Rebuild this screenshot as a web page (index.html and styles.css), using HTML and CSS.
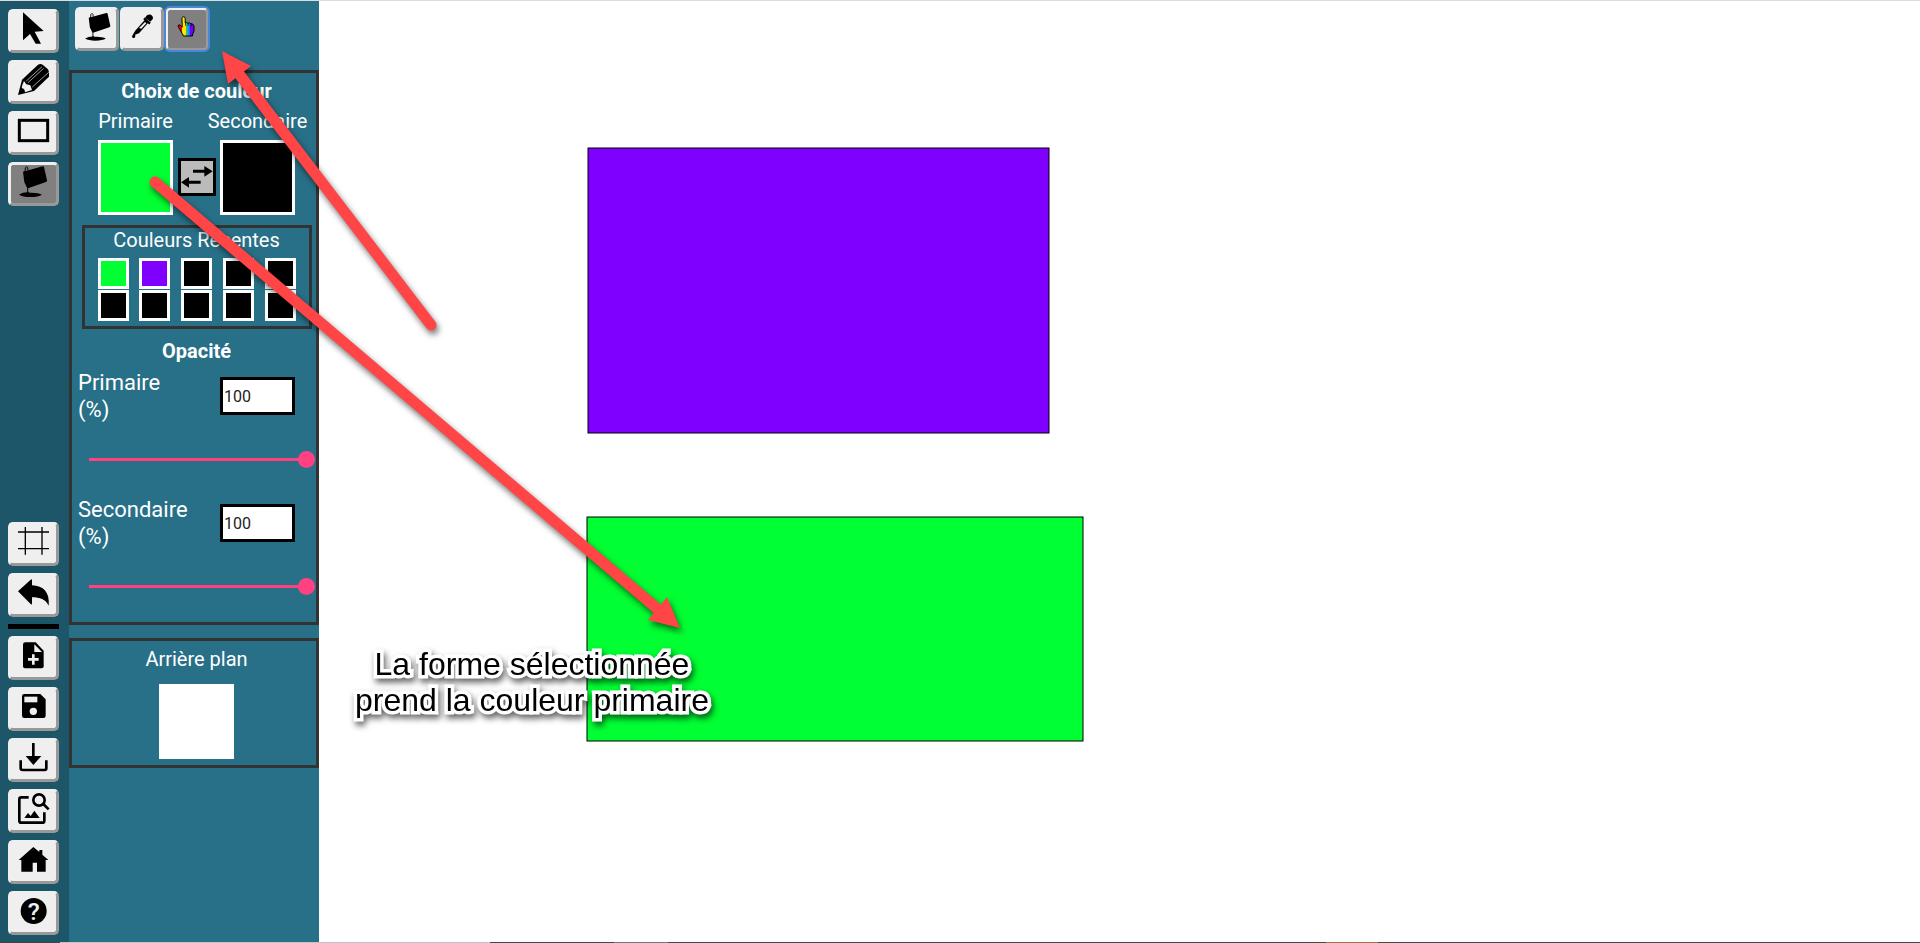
FILE: index.html
```html
<!DOCTYPE html>
<html lang="fr">
<head>
<meta charset="utf-8">
<title>Dessin</title>
<link rel="stylesheet" href="styles.css">
</head>
<body>
<svg class="defs" aria-hidden="true">
  <defs>
    <g id="bucket">
      <path d="M69 515L128 499Q131 498 132 501L141 541Q142 544 138 546L86 564Q82 565 80 561L73 547Z"/>
      <path d="M75 516Q75 500 80 500Q84 501 84 511M83 560V579" fill="none" stroke="#000" stroke-width="3"/>
      <path d="M57 584Q68 577 82 577Q84 573 88 578Q115 577 126 584Q116 591 91 591Q68 591 57 584Z"/>
    </g>
    <linearGradient id="rainbow" gradientUnits="userSpaceOnUse" x1="535" x2="585" y1="0" y2="0">
      <stop offset=".24" stop-color="#f00000"/><stop offset=".24" stop-color="#ffe600"/>
      <stop offset=".46" stop-color="#ffe600"/><stop offset=".46" stop-color="#35d000"/>
      <stop offset=".58" stop-color="#35d000"/><stop offset=".58" stop-color="#1ba8ff"/>
      <stop offset=".72" stop-color="#2465ff"/><stop offset=".72" stop-color="#6a00f0"/>
      <stop offset="1" stop-color="#7a00ff"/>
    </linearGradient>
  </defs>
</svg>
<div class="app">
  <nav class="rail" aria-label="Outils">
    <button class="tool" aria-label="Sélection"><svg viewBox="24 27 153 132"><path d="M69 37L131 93L104 95L123 131H107L90 102L69 121Z"/></svg></button>
    <button class="tool" aria-label="Crayon"><svg viewBox="24 180 153 132"><path d="M54 285L66 239L114 194Q121 190 128 194L143 207Q148 212 147 230L102 273Z"/><path class="light" d="M67 255L72 243L79 253L91 256L96 270L75 277Q75 266 65 264Z"/><path class="cut" d="M79 243L126 200M84 248L131 205M97 261L146 217"/></svg></button>
    <button class="tool" aria-label="Rectangle"><svg viewBox="24 333 153 132"><rect class="line" x="58" y="361" width="85" height="61" stroke-width="9"/></svg></button>
    <button class="tool active" aria-label="Couleur"><svg viewBox="24 486 153 132"><use href="#bucket"/></svg></button>
    <button class="tool first-low" aria-label="Grille"><svg viewBox="24 36 153 132"><path class="line" stroke-width="4" d="M76 51V134M126 51V134M54 66H147M54 116H147"/></svg></button>
    <button class="tool" aria-label="Annuler"><svg viewBox="24 189 153 132"><path d="M54 244L92 209Q96 205 96 211V226C130 227 150 247 146 287C137 268 120 262 96 262V280Q96 286 92 282Z"/></svg></button>
    <hr class="divider">
    <button class="tool" aria-label="Nouveau dessin"><svg viewBox="24 375 153 132"><path d="M69 401Q69 394 76 394H107L131 419V466Q131 472 125 472H75Q69 472 69 466Z"/><path class="light" d="M103 400V423H126Z"/><path class="cut wide" d="M100 430V461M84 445H116"/></svg></button>
    <button class="tool" aria-label="Sauvegarder"><svg viewBox="24 531 153 132"><path d="M66 559Q66 552 73 552H121L137 568V617Q137 624 130 624H73Q66 624 66 617Z"/><path class="light" d="M73 560H112V577H73Z"/><circle class="light" cx="100" cy="604" r="11"/></svg></button>
    <button class="tool" aria-label="Exporter"><svg viewBox="24 54 153 132"><path class="line" stroke-width="8" d="M62 121V144Q62 150 68 150H134Q139 150 139 144V121M100 69V110"/><path d="M77 108H124L100 135Z"/></svg></button>
    <button class="tool" aria-label="Galerie"><svg viewBox="24 207 153 132"><path class="line" stroke-width="8" d="M86 232H64Q58 232 58 238V302Q58 308 64 308H127Q133 308 133 302V277M130 252L146 268"/><circle class="line" stroke-width="8" cx="117" cy="240" r="17"/><path d="M73 294L84 279L92 288L103 272L119 294Z"/></svg></button>
    <button class="tool" aria-label="Accueil"><svg viewBox="24 360 153 132"><path d="M100 381L118 396V390H127V404L145 420H137V455H111V428H98V455H64V420H56Z"/></svg></button>
    <button class="tool" aria-label="Aide"><svg viewBox="24 513 153 132"><circle cx="101" cy="573" r="39"/><text class="mark" x="101" y="599" text-anchor="middle">?</text></svg></button>
  </nav>

  <aside class="panel">
    <div class="modes">
      <button class="mode" aria-label="Seau"><svg viewBox="225 21 132 132"><use href="#bucket" transform="translate(204 -410) scale(.9)"/></svg></button>
      <button class="mode" aria-label="Pipette"><svg viewBox="360 21 132 132"><path d="M435 53L441 46Q446 42 453 44Q460 48 459 56L451 65Z"/><path class="line" stroke-width="7" d="M432 55L450 71"/><path d="M434 60L444 69L417 100L403 105L401 100L407 91Z"/><path class="light" d="M435 66L439 70L424 86L417 84Z"/><path d="M402 99Q409 106 404 113Q398 116 396 110Q397 105 402 99Z"/></svg></button>
      <button class="mode active focused" aria-label="Application de couleur"><svg viewBox="495 20 135 135"><path d="M547 55Q548 50 552 50Q557 50 557 56V69Q561 65 565 70Q569 66 574 71Q581 70 584 78V94Q580 101 579 109H552L544 95L535 79Q535 74 541 75L548 82Z" fill="url(#rainbow)" stroke="#000" stroke-width="3"/><path d="M558 69V78M566 70V78M575 73V80" stroke="#000" stroke-width="2"/></svg></button>
    </div>

    <section class="box">
      <h2 class="title">Choix de couleur</h2>
      <div class="pair">
        <div class="choice"><span class="caption">Primaire</span><button class="swatch green" aria-label="Couleur primaire"></button></div>
        <button class="swap" aria-label="Échanger les couleurs"><svg viewBox="534 474 114 114"><path class="line" stroke-width="9" d="M579 514H616M565 547H602"/><path d="M613 498L638 514L613 530ZM567 531L543 547L567 563Z"/></svg></button>
        <div class="choice"><span class="caption">Secondaire</span><button class="swatch black" aria-label="Couleur secondaire"></button></div>
      </div>
      <div class="recent">
        <h3 class="subtitle">Couleurs Récentes</h3>
        <div class="grid">
          <button class="chip green" aria-label="Couleur 1"></button><button class="chip purple" aria-label="Couleur 2"></button><button class="chip black" aria-label="Couleur 3"></button><button class="chip black" aria-label="Couleur 4"></button><button class="chip black" aria-label="Couleur 5"></button>
          <button class="chip black" aria-label="Couleur 6"></button><button class="chip black" aria-label="Couleur 7"></button><button class="chip black" aria-label="Couleur 8"></button><button class="chip black" aria-label="Couleur 9"></button><button class="chip black" aria-label="Couleur 10"></button>
        </div>
      </div>
      <h2 class="title opacity">Opacité</h2>
      <div class="field"><label for="p">Primaire (%)</label><input class="value" id="p" type="text" value="100"></div>
      <input class="slider" type="range" value="100" aria-label="Opacité primaire">
      <div class="field"><label for="s">Secondaire (%)</label><input class="value" id="s" type="text" value="100"></div>
      <input class="slider" type="range" value="100" aria-label="Opacité secondaire">
    </section>

    <section class="box back">
      <h3 class="subtitle">Arrière plan</h3>
      <button class="swatch white" aria-label="Couleur d'arrière plan"></button>
    </section>
  </aside>

  <main class="canvas">
    <svg class="drawing" role="img" aria-label="Dessin">
      <rect x="269" y="148" width="461" height="285" fill="#7f00ff" stroke="#000"/>
      <rect x="268" y="517" width="496" height="224" fill="#00ff33" stroke="#000"/>
    </svg>
  </main>

  <svg class="arrows" aria-hidden="true">
    <path class="shaft" d="M431 325L236 70M155 182L660 611"/>
    <path d="M222 51L251 66L228 84ZM680 628L667 597L648 620Z"/>
  </svg>
  <p class="note">La forme sélectionnée<br>prend la couleur primaire</p>
</div>
<div class="edge"></div>
</body>
</html>
```
FILE: styles.css
```css
* { box-sizing: border-box; }
body {
  margin: 0;
  min-height: 100vh;
  display: flex;
  flex-direction: column;
  background: #fff;
  color: #fff;
  font-family: Roboto, "Liberation Sans", sans-serif;
  font-size: 20px;
  line-height: 24px;
}
button { padding: 0; font: inherit; }
h2, h3, p { margin: 0; }
.defs { position: absolute; width: 0; height: 0; }
.app {
  position: relative;
  flex: 1;
  display: flex;
  border-top: 1px solid #d9dce0;
}
.edge {
  height: 1px;
  background: linear-gradient(90deg, #444 0 60px, #c4c4c4 60px 490px, #484848 490px 614px, #777 614px 668px, #484848 668px 1326px, #b0703c 1326px 1378px, #484848 1378px);
}

.rail {
  width: 69px;
  padding: 8px 10px 7px 8px;
  display: flex;
  flex-direction: column;
  gap: 7px;
  background: #1c5668;
}
.tool, .mode {
  flex: none;
  height: 44px;
  background: #efefef;
  border: 3px solid;
  border-color: #efefef #999 #999 #efefef;
  border-radius: 5px;
}
.tool { width: 51px; }
.mode { width: 44px; }
.tool svg, .mode svg { display: block; height: 44px; margin: -3px; }
.tool svg { width: 51px; }
.mode svg { width: 44px; }
.active { background: #808080; }
.focused { outline: 2px solid #4a86dc; outline-offset: -1px; }
.first-low { margin-top: auto; }
.divider { flex: none; width: 51px; height: 5px; margin: 0; border: 0; background: #000; }
.line { fill: none; stroke: #000; }
.light { fill: #efefef; }
.cut { fill: none; stroke: #efefef; stroke-width: 2; }
.cut.wide { stroke-width: 8; }
.mark { fill: #efefef; font-size: 74px; font-weight: 500; }

.panel { width: 250px; background: #287087; }
.modes { display: flex; gap: 1px; padding: 6px 6px 19px; }
.box {
  padding: 6px 1px 27px 6px;
  border: 3px solid #333;
  display: flex;
  flex-direction: column;
  align-items: center;
}
.title { font-size: 20px; font-weight: 700; }
.subtitle { font-size: 20px; font-weight: 400; text-align: center; }
.pair { display: flex; align-items: flex-end; justify-content: space-between; width: 197px; margin-top: 6px; }
.choice { width: 75px; display: flex; flex-direction: column; align-items: center; gap: 7px; }
.caption { white-space: nowrap; }
.swatch { width: 75px; height: 75px; border: 3px solid #fff; }
.green { background: #00ff33; }
.purple { background: #7f00ff; }
.black { background: #000; }
.white { background: #fff; }
.swap { width: 38px; height: 38px; margin-bottom: 19px; border: 3px solid #000; background: #bbb; }
.swap svg { display: block; width: 38px; height: 38px; margin: -3px; }
.recent { width: 230px; margin-top: 10px; padding: 0 13px 5px; border: 3px solid #333; }
.grid { display: grid; grid-template-columns: repeat(5, 31px); justify-content: space-between; row-gap: 1px; margin-top: 6px; }
.chip { height: 31px; border: 3px solid #fff; }
.opacity { margin-top: 10px; }
.field {
  align-self: stretch;
  display: flex;
  align-items: center;
  justify-content: space-between;
  margin-top: 6px;
  padding-right: 20px;
  font-size: 22px;
  line-height: 27px;
}
.field label { width: 116px; }
.value {
  width: 75px;
  height: 38px;
  padding: 0 1px;
  border: 3px solid #000;
  background: #fff;
  color: #222;
  font: 16px Roboto, sans-serif;
}
.slider {
  appearance: none;
  width: 226px;
  height: 18px;
  margin: 27px 0 0 10px;
  background: transparent;
}
.slider + .field { margin-top: 28px; }
.slider::-webkit-slider-runnable-track { height: 3px; background: #ff4081; }
.slider::-webkit-slider-thumb { appearance: none; width: 17px; height: 17px; margin-top: -7px; border-radius: 50%; background: #ff4081; }
.back { margin-top: 13px; padding: 6px 1px 6px 6px; gap: 13px; }

.canvas { flex: 1; display: flex; }
.drawing { flex: 1; margin-top: -1px; overflow: visible; }
.arrows {
  position: absolute;
  top: -1px;
  left: 0;
  width: 100%;
  height: 100%;
  pointer-events: none;
  fill: #ff4545;
  filter: drop-shadow(2px 4px 3px rgba(0, 0, 0, .55));
}
.shaft { fill: none; stroke: #ff4545; stroke-width: 11; stroke-linecap: round; }
.note {
  position: absolute;
  left: 355px;
  top: 645px;
  color: #000;
  font: 32px/36px "Liberation Sans", Arial, sans-serif;
  text-align: center;
  -webkit-text-stroke: 7px #fff;
  paint-order: stroke fill;
  stroke-linejoin: round;
  filter: drop-shadow(2px 4px 3px rgba(0, 0, 0, .6));
}
```
